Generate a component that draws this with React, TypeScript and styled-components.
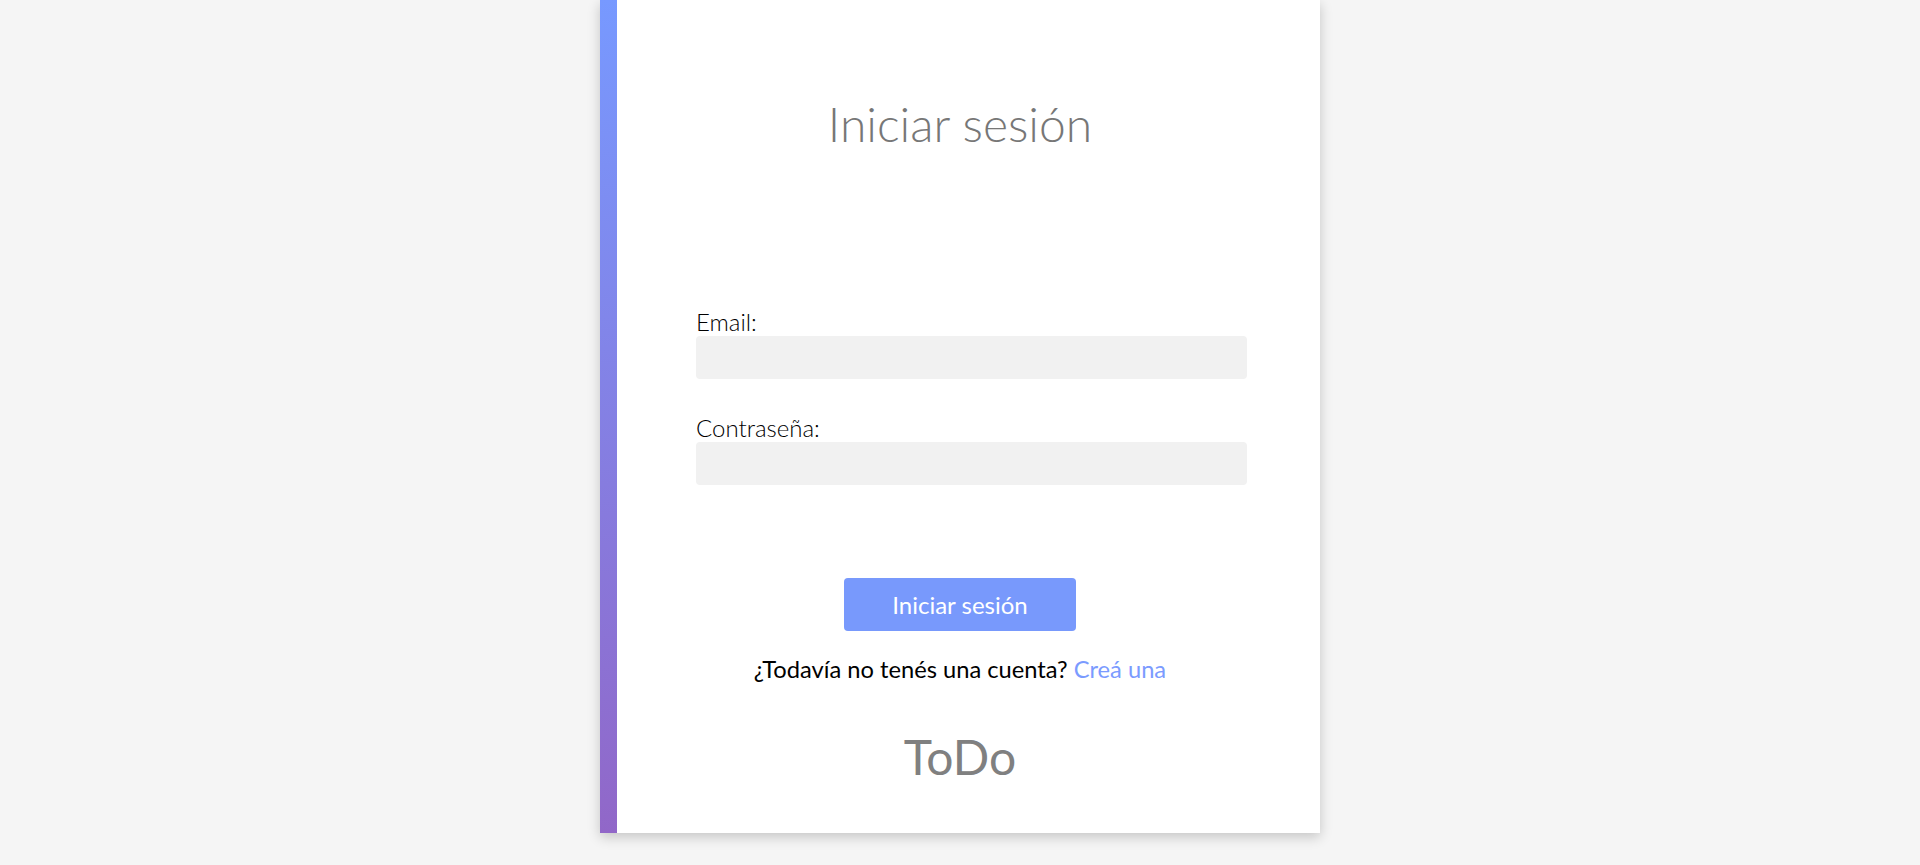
import React from "react";
import styled, { createGlobalStyle } from "styled-components";

const GlobalStyle = createGlobalStyle`
  html, body {
    margin: 0;
    padding: 0;
    background: #f5f5f5;
    font-family: Lato, "Open Sans", sans-serif;
  }
  * { box-sizing: border-box; }
`;

const Page = styled.main`
  display: flex;
  justify-content: center;
  align-items: flex-start;
  min-height: 865px;
`;

const Card = styled.section`
  width: 720px;
  background: linear-gradient(180deg, #7799ff 0%, #9167c8 100%) left top / 17px 100% no-repeat, #ffffff;
  box-shadow: 0 4px 12px rgba(0, 0, 0, 0.2);
  display: flex;
  flex-direction: column;
  align-items: center;
  padding: 95px 0 47px;
`;

const Title = styled.h1`
  margin: 0;
  font-family: Lato, sans-serif;
  font-weight: 300;
  font-size: 48px;
  line-height: 58px;
  color: #777777;
`;

const Form = styled.form`
  align-self: stretch;
  margin-top: 154px;
  display: flex;
  flex-direction: column;
`;

const Field = styled.div<{ $gap?: number }>`
  display: flex;
  flex-direction: column;
  margin: ${(p) => p.$gap ?? 0}px 73px 0 96px;
`;

const Label = styled.label`
  font-family: Lato, sans-serif;
  font-weight: 300;
  font-size: 24px;
  line-height: 29px;
  color: #000000;
`;

const Input = styled.input`
  height: 43px;
  border: none;
  border-radius: 4px;
  background: #f1f1f1;
  outline: none;
  padding: 0 12px;
  font-family: Lato, sans-serif;
  font-size: 18px;
`;

const Submit = styled.button`
  align-self: center;
  margin-top: 93px;
  width: 232px;
  height: 53px;
  border: none;
  border-radius: 4px;
  background: #7899fc;
  color: #ffffff;
  font-family: Lato, sans-serif;
  font-weight: 400;
  font-size: 24px;
  cursor: pointer;
`;

const Hint = styled.p`
  margin: 24px 0 0;
  font-family: Lato, sans-serif;
  font-size: 23.7px;
  line-height: 29px;
  color: #000000;
`;

const Link = styled.a`
  color: #7b9bff;
  text-decoration: none;
`;

const Brand = styled.div`
  margin-top: 44px;
  font-family: Lato, sans-serif;
  font-size: 48px;
  line-height: 58px;
  color: #808080;
`;

export default function App() {
  return (
    <>
      <GlobalStyle />
      <Page>
        <Card>
          <Title>Iniciar sesión</Title>
          <Form onSubmit={(e) => e.preventDefault()}>
            <Field>
              <Label htmlFor="email">Email:</Label>
              <Input id="email" type="email" />
            </Field>
            <Field $gap={34}>
              <Label htmlFor="password">Contraseña:</Label>
              <Input id="password" type="password" />
            </Field>
            <Submit type="submit">Iniciar sesión</Submit>
          </Form>
          <Hint>
            ¿Todavía no tenés una cuenta? <Link href="#">Creá una</Link>
          </Hint>
          <Brand>ToDo</Brand>
        </Card>
      </Page>
    </>
  );
}
